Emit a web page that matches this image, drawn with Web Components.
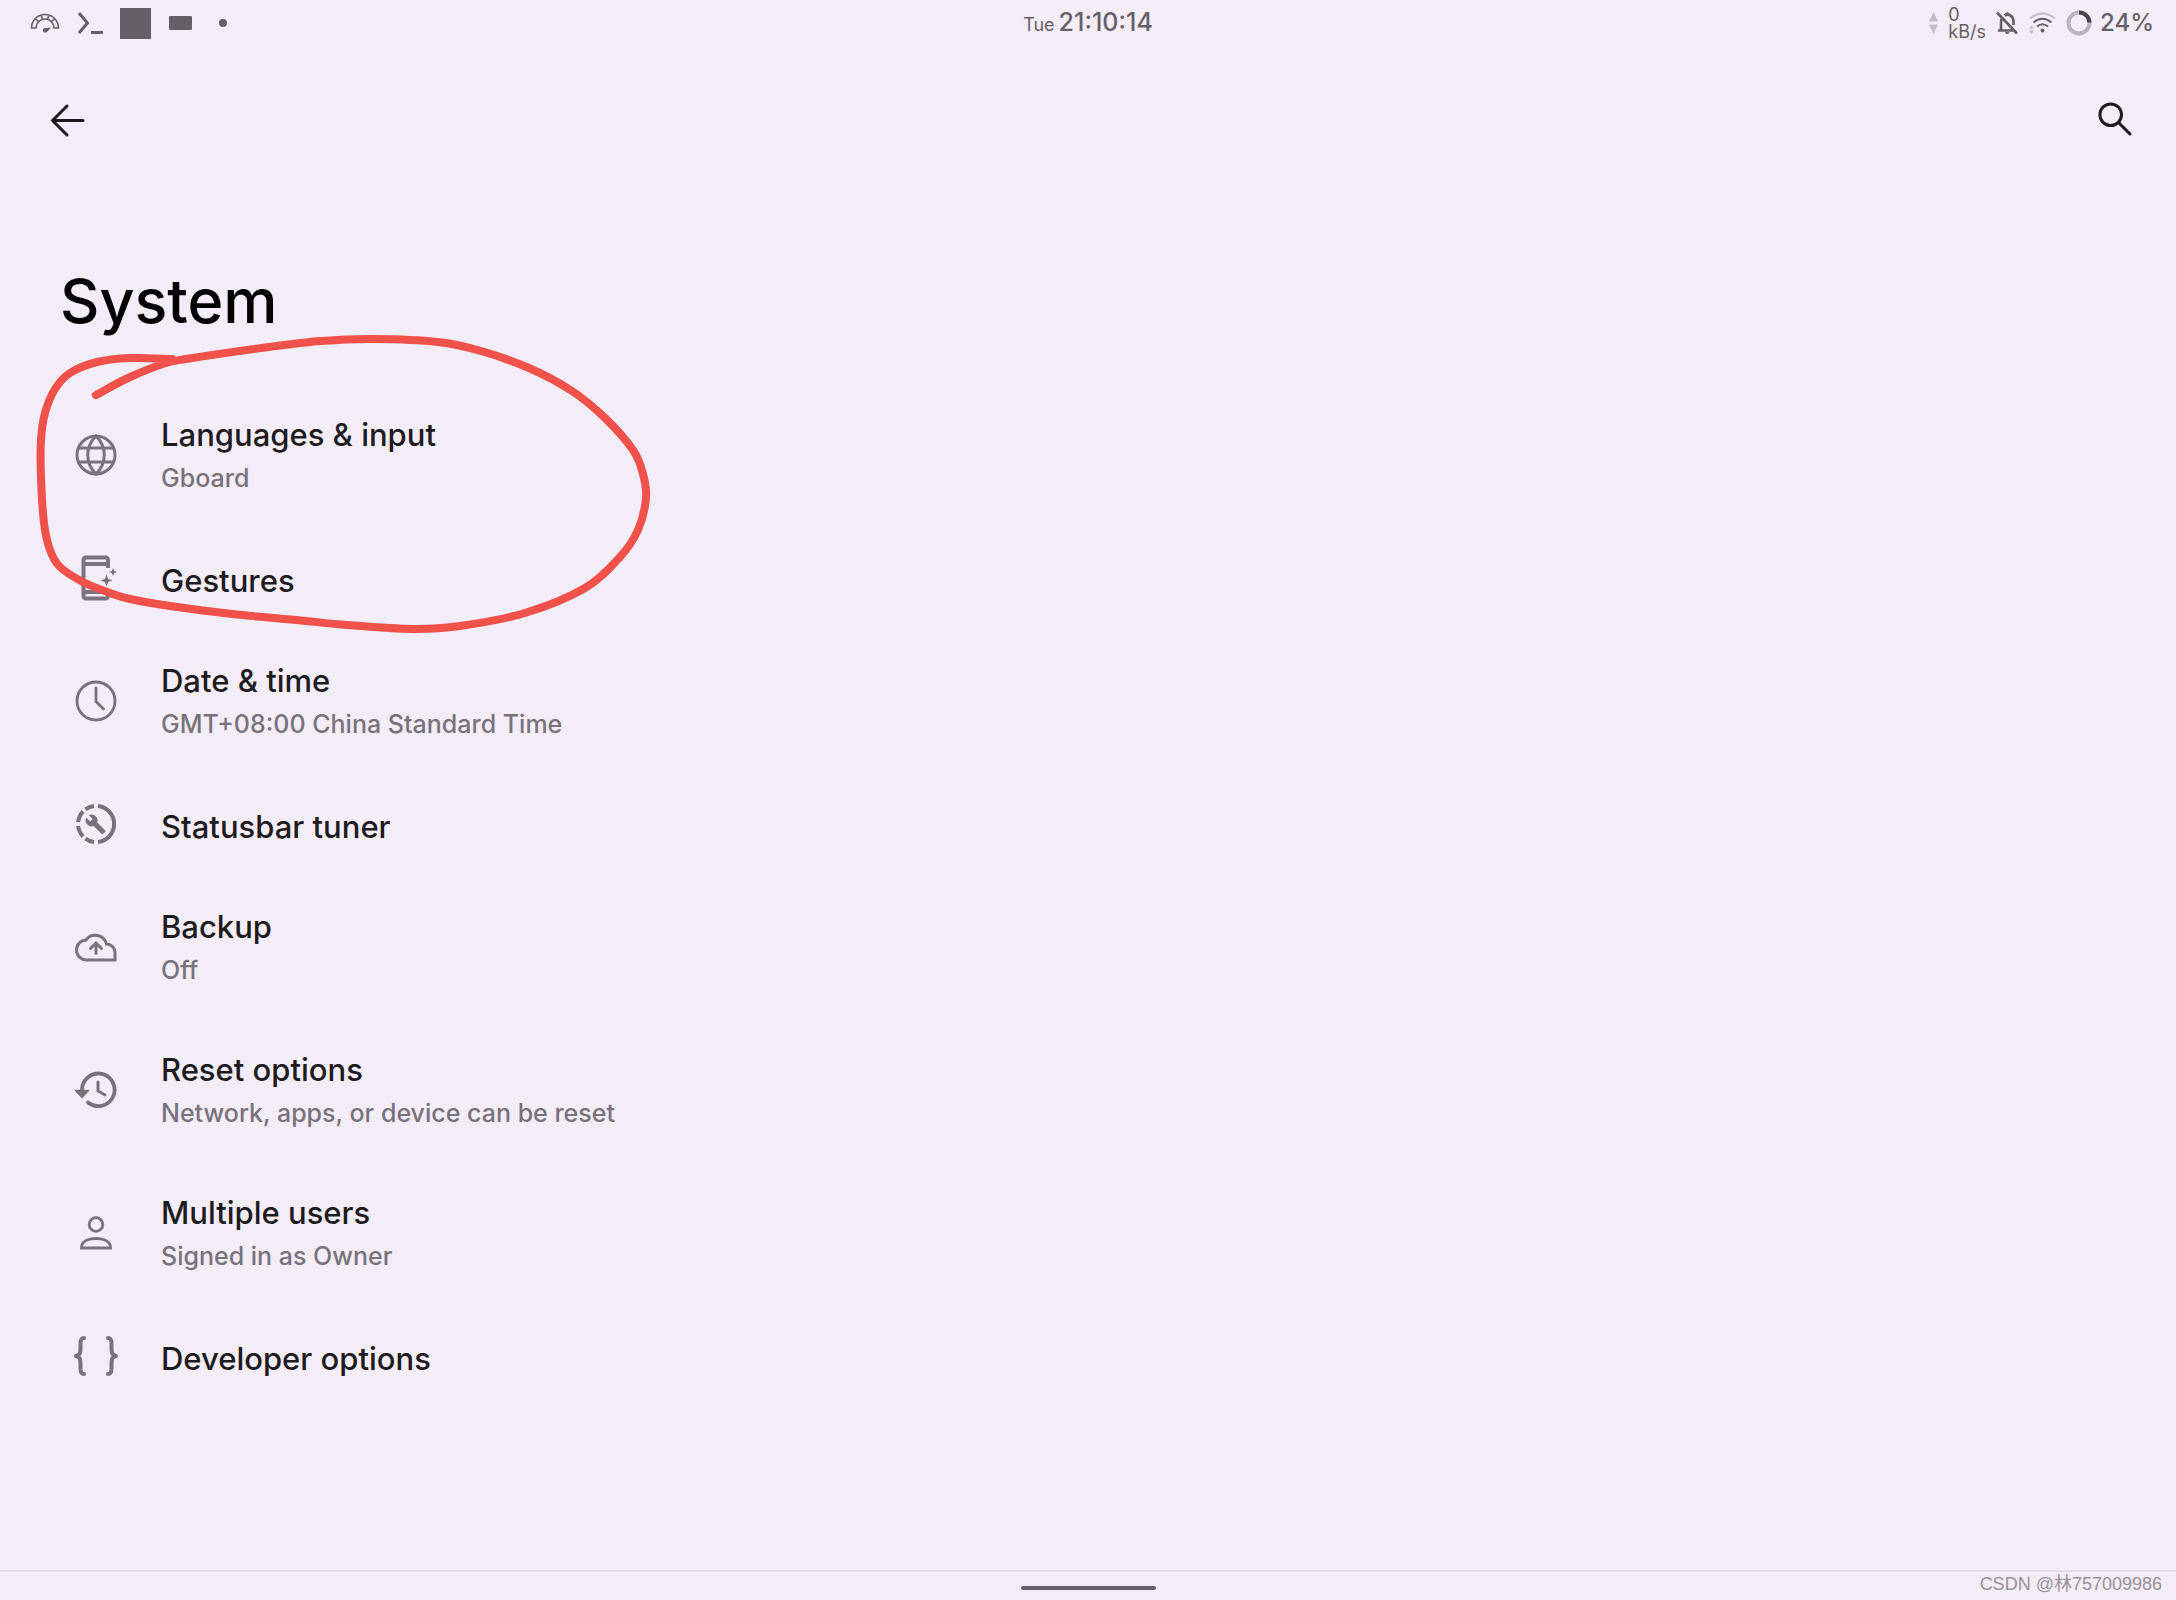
<!DOCTYPE html>
<html lang="en">
<head>
  <meta charset="utf-8">
  <title>System</title>
  <style>
    :root {
      --surface: #f3edf7;
      --ink: #1d1b20;
      --muted: #77727b;
      --status: #655f68;
      --faint: #c3bdc8;
    }

    body {
      margin: 0;
      min-height: 100vh;
      display: flex;
      flex-direction: column;
      position: relative;
      background: var(--surface);
      color: var(--ink);
      font-family: "Google Sans", Inter, "Noto Sans CJK SC", sans-serif;
      font-weight: 500;
    }

    main {
      flex: 1;
    }

    h1 {
      margin: 0;
      padding: 85px 60px 45px;
      font-size: 61px;
      line-height: 80px;
      font-weight: 500;
      color: #000;
    }
  </style>
</head>
<body>
  <status-bar></status-bar>
  <app-toolbar></app-toolbar>
  <main>
    <h1>System</h1>
    <settings-list>
      <setting-row icon="globe">Languages &amp; input<span slot="summary">Gboard</span></setting-row>
      <setting-row icon="gestures">Gestures</setting-row>
      <setting-row icon="clock">Date &amp; time<span slot="summary">GMT+08:00 China Standard Time</span></setting-row>
      <setting-row icon="tuner">Statusbar tuner</setting-row>
      <setting-row icon="backup">Backup<span slot="summary">Off</span></setting-row>
      <setting-row icon="reset">Reset options<span slot="summary">Network, apps, or device can be reset</span></setting-row>
      <setting-row icon="user">Multiple users<span slot="summary">Signed in as Owner</span></setting-row>
      <setting-row icon="braces">Developer options</setting-row>
    </settings-list>
  </main>
  <nav-handle>CSDN @林757009986</nav-handle>
  <pen-stroke></pen-stroke>

  <script>
    // all row icons are drawn on a 48x48 grid
    const icons = {
      globe: `
        <g stroke-width="3">
          <circle cx="24" cy="24" r="19"/>
          <path d="M24 5C13 16 13 32 24 43C35 32 35 16 24 5ZM6 17H42M6 31H42"/>
        </g>`,
      gestures: `
        <g stroke-width="4">
          <path d="M36 14V6a2.5 2.5 0 0 0-2.5-2.5H14A2.5 2.5 0 0 0 11.5 6V42a2.5 2.5 0 0 0 2.5 2.5H33.5A2.5 2.5 0 0 0 36 42V37"/>
          <path d="M12 10H36M12 38H36"/>
        </g>
        <path fill="currentColor" stroke="none" d="M34.5 20.5l1.6 4.4 4.4 1.6-4.4 1.6-1.6 4.4-1.6-4.4-4.4-1.6 4.4-1.6ZM41 14l1.2 2.9 2.9 1.1-2.9 1.1-1.2 2.9-1.2-2.9-2.9-1.1 2.9-1.1Z"/>`,
      clock: `
        <g stroke-width="2.8">
          <circle cx="24" cy="24" r="19"/>
          <path stroke-linecap="round" d="M24 11V24.5L31.5 32"/>
        </g>`,
      tuner: `
        <path stroke-width="4" d="M26 6.1A18 18 0 0 1 26 41.9M22 6.1A18 18 0 0 0 13.4 9.4M11.1 11.5A18 18 0 0 0 6.1 22.1M6.1 25.9A18 18 0 0 0 11.1 36.5M13.4 38.6A18 18 0 0 0 22 41.9"/>
        <path fill="currentColor" stroke="currentColor" stroke-width=".6" transform="translate(13 13.8) scale(.88)" d="M22.7 19l-9.1-9.1c.9-2.3.4-5-1.5-6.9-2-2-5-2.4-7.4-1.3L9 6 6 9 1.6 4.7C.4 7.1.9 10.1 2.9 12.1c1.9 1.9 4.6 2.4 6.9 1.5l9.1 9.1c.4.4 1 .4 1.4 0l2.3-2.3c.5-.4.5-1.1.1-1.4z"/>`,
      backup: `
        <path stroke-width="3" d="M43 37H15A10 10 0 0 1 14 17A11.5 11.5 0 0 1 34.5 21A8.5 8.5 0 0 1 43 29.5Z"/>
        <path stroke-width="3" d="M24 31.5V20.5"/>
        <path stroke-width="3" stroke-linecap="round" d="M18.5 25.5L24 20L29.5 25.5"/>`,
      reset: `
        <path stroke-width="3.8" stroke-linecap="round" d="M10 24A16.3 16.3 0 1 1 16 36.5"/>
        <path fill="currentColor" stroke-width="1.5" stroke-linejoin="round" d="M3.5 24.5H16.5L10 31.5Z"/>
        <path stroke-width="3" stroke-linecap="round" d="M26 16V25L33 29"/>`,
      user: `
        <g stroke-width="2.8">
          <circle cx="24" cy="15.5" r="6.8"/>
          <path d="M9.4 39C9.4 32.5 16 29.5 24 29.5S38.6 32.5 38.6 39Z"/>
        </g>`,
      braces: `
        <g stroke-width="4" stroke-linecap="round" stroke-linejoin="round">
          <path d="M12 6C8.5 6 8.5 9 8.5 12V16C8.5 21 8 23 4 24C8 25 8.5 27 8.5 32V36C8.5 39 8.5 42 12 42"/>
          <path d="M36 6C39.5 6 39.5 9 39.5 12V16C39.5 21 40 23 44 24C40 25 39.5 27 39.5 32V36C39.5 39 39.5 42 36 42"/>
        </g>`,
    }

    class StatusBar extends HTMLElement {
      constructor() {
        super()
        this.attachShadow({ mode: 'open' })
        this.shadowRoot.innerHTML = `${this.css}${this.html}`
      }

      get css() {
        return /*html*/`
          <style>
            :host {
              display: grid;
              grid-template-columns: 1fr auto 1fr;
              align-items: center;
              height: 46px;
              padding: 0 22px;
              color: var(--status);
              font-size: 25px;
              line-height: 32px;
            }

            svg {
              display: block;
              flex: none;
              fill: none;
              stroke: currentColor;
            }

            div {
              display: flex;
              align-items: center;
            }

            .notifications {
              gap: 16px;
              padding-left: 8px;
            }

            .block {
              width: 31px;
              height: 31px;
              margin-left: 1px;
              background: currentColor;
            }

            .card {
              width: 23px;
              height: 14px;
              border-radius: 1px;
              margin-left: 2px;
              background: currentColor;
            }

            .dot {
              width: 8px;
              height: 8px;
              border-radius: 50%;
              margin-left: 11px;
              background: currentColor;
            }

            .clock {
              gap: 4px;
              align-items: baseline;
            }

            .clock small {
              font-size: 18px;
              font-weight: 400;
            }

            .system {
              justify-content: flex-end;
              gap: 10px;
            }

            .speed {
              display: block;
              font-size: 18px;
              line-height: 17px;
              font-weight: 400;
            }

            .battery {
              font-size: 24px;
              margin-left: -2px;
            }

            .faint {
              color: var(--faint);
            }
          </style>
        `
      }

      get html() {
        return /*html*/`
          <div class="notifications">
            <svg width="30" height="22" viewBox="0 0 30 22" stroke-width="1.6">
              <path d="M1.5 16A13.5 13.5 0 0 1 28.5 16H24A9 9 0 0 0 6 16ZM5 6.5L9 10M11 2.5L12.5 7.5M19 2.5L17.5 7.5M25 6.5L21 10"/>
              <path fill="currentColor" stroke="none" d="M21 15.5L18 19Q16 21.5 13.5 20Q12 17.5 14 16.2Z"/>
            </svg>
            <svg width="27" height="22" viewBox="0 0 27 22" stroke-width="3">
              <path d="M3 1L11.5 11L3 21M15 20.5H27"/>
            </svg>
            <span class="block"></span>
            <span class="card"></span>
            <span class="dot"></span>
          </div>
          <div class="clock"><small>Tue</small><span>21:10:14</span></div>
          <div class="system">
            <svg class="faint" width="9" height="22" viewBox="0 0 9 22">
              <path fill="currentColor" stroke="none" d="M4.5 0L9 9.5H0ZM4.5 22L9 12.5H0Z"/>
            </svg>
            <div class="speed">0<br>kB/s</div>
            <svg width="22" height="24" viewBox="0 0 22 24" stroke-width="2.6">
              <path d="M1 1.5L21 22.5M2 19.5H17M5 19V11C5 9 5.5 8 6 7M8.5 4.5C13 2 17.5 5 17.5 11V14"/>
              <path fill="currentColor" stroke="none" d="M9 3a2.3 2.3 0 0 1 4.5 0V5H9ZM9 21H13.5Q13.5 23 11.2 23Q9 23 9 21Z"/>
            </svg>
            <svg width="28" height="22" viewBox="0 0 28 22" stroke-width="2">
              <path stroke="var(--faint)" d="M2 6.5Q14.5-3.5 27 6.5"/>
              <path d="M5.5 10.5Q14.5 3 23.5 10.5M9 14.5Q14.5 10 20 14.5"/>
              <circle cx="14.5" cy="18.5" r="2" fill="currentColor" stroke="none"/>
              <path fill="var(--faint)" stroke="none" d="M3.5 13L6 16.5H1ZM3.5 22L6 18.5H1Z"/>
            </svg>
            <svg width="26" height="26" viewBox="0 0 26 26" stroke-width="4">
              <circle cx="13" cy="13" r="10.5" stroke="#b9b3be"/>
              <path stroke="#4a454e" d="M13 2.5A10.5 10.5 0 0 1 23.5 12.5"/>
            </svg>
            <span class="battery">24%</span>
          </div>
        `
      }
    }

    class AppToolbar extends HTMLElement {
      constructor() {
        super()
        this.attachShadow({ mode: 'open', delegatesFocus: true })
        this.shadowRoot.innerHTML = `${this.css}${this.html}`
      }

      get css() {
        return /*html*/`
          <style>
            :host {
              display: flex;
              justify-content: space-between;
              align-items: center;
              height: 112px;
              padding: 18px 36px 0 44px;
            }

            button {
              display: block;
              padding: 0;
              border: none;
              background: transparent;
              color: inherit;
              cursor: pointer;
            }

            svg {
              display: block;
              fill: none;
              stroke: currentColor;
              stroke-width: 3;
              stroke-linecap: round;
              stroke-linejoin: round;
            }
          </style>
        `
      }

      get html() {
        return /*html*/`
          <button aria-label="Navigate up">
            <svg width="48" height="48" viewBox="0 0 48 48">
              <path d="M39 24.5H9M23 10L8.5 24.5L23 39"/>
            </svg>
          </button>
          <button aria-label="Search settings">
            <svg width="48" height="48" viewBox="0 0 48 48">
              <circle cx="18.7" cy="18.7" r="10.8"/>
              <path d="M26.5 26.5L38 38"/>
            </svg>
          </button>
        `
      }
    }

    class SettingsList extends HTMLElement {
      constructor() {
        super()
        this.attachShadow({ mode: 'open' })
        this.shadowRoot.innerHTML = /*html*/`
          <style>
            :host {
              display: flex;
              flex-direction: column;
            }
          </style>
          <slot></slot>
        `
      }
    }

    class SettingRow extends HTMLElement {
      constructor() {
        super()
        this.attachShadow({ mode: 'open', delegatesFocus: true })
      }

      connectedCallback() {
        this.shadowRoot.innerHTML = `${this.css}${this.html}`
      }

      get css() {
        return /*html*/`
          <style>
            :host {
              display: block;
            }

            a {
              display: flex;
              align-items: center;
              gap: 41px;
              padding: 22px 72px 23px;
              color: var(--ink);
              text-decoration: none;
            }

            svg {
              display: block;
              flex: none;
              margin: 3px 0 7px;
              color: var(--muted);
              fill: none;
              stroke: currentColor;
            }

            .text {
              padding: 5px 0;
            }

            .title {
              font-size: 31px;
              line-height: 43px;
            }

            ::slotted([slot="summary"]) {
              display: block;
              color: var(--muted);
              font-size: 25px;
              line-height: 45px;
            }
          </style>
        `
      }

      get html() {
        return /*html*/`
          <a href="#">
            <svg width="48" height="48" viewBox="0 0 48 48">${icons[this.getAttribute('icon')]}</svg>
            <div class="text">
              <div class="title"><slot></slot></div>
              <slot name="summary"></slot>
            </div>
          </a>
        `
      }
    }

    class NavHandle extends HTMLElement {
      constructor() {
        super()
        this.attachShadow({ mode: 'open' })
        this.shadowRoot.innerHTML = /*html*/`
          <style>
            :host {
              display: grid;
              grid-template-columns: 1fr auto 1fr;
              align-items: center;
              height: 28px;
              padding: 0 14px;
              border-top: 2px solid #e2dce5;
            }

            .pill {
              grid-column: 2;
              width: 135px;
              height: 4px;
              margin-top: 4px;
              border-radius: 2px;
              background: var(--status);
            }

            .mark {
              justify-self: end;
              margin-bottom: 4px;
              color: #96919a;
              font: 400 18px/24px "Liberation Sans", "Noto Sans CJK SC", sans-serif;
            }
          </style>
          <span class="pill"></span>
          <span class="mark"><slot></slot></span>
        `
      }
    }

    class PenStroke extends HTMLElement {
      #points = [
        [96, 395], [128, 378], [163, 364], [186, 359], [269, 347], [321, 341], [373, 339],
        [438, 342], [481, 351], [529, 368], [572, 391], [605, 418], [633, 450], [643, 474],
        [646, 498], [638, 530], [620, 557], [585, 588], [525, 613], [460, 626], [412, 629],
        [347, 625], [297, 620], [232, 614], [170, 606], [130, 599], [110, 593], [83, 582],
        [60, 567], [50, 550], [44, 523], [41, 477], [41, 440], [45, 413], [55, 389],
        [70, 373], [97, 362], [130, 358], [172, 359],
      ]

      constructor() {
        super()
        this.attachShadow({ mode: 'open' })
        this.shadowRoot.innerHTML = /*html*/`
          <style>
            :host {
              position: absolute;
              top: 0;
              left: 0;
              pointer-events: none;
            }

            path {
              fill: none;
              stroke: #f0524b;
              stroke-width: 8;
              stroke-linecap: round;
              stroke-linejoin: round;
            }
          </style>
          <svg width="680" height="660"><path d="${this.outline}"/></svg>
        `
      }

      // smooth curve through every point
      get outline() {
        const p = this.#points
        let d = `M${p[0]}`
        for (let i = 0; i < p.length - 1; i++) {
          const before = p[i - 1] ?? p[i]
          const after = p[i + 2] ?? p[i + 1]
          const c1 = [0, 1].map((k) => p[i][k] + (p[i + 1][k] - before[k]) / 6)
          const c2 = [0, 1].map((k) => p[i + 1][k] - (after[k] - p[i][k]) / 6)
          d += `C${c1} ${c2} ${p[i + 1]}`
        }
        return d
      }
    }

    customElements.define('status-bar', StatusBar)
    customElements.define('app-toolbar', AppToolbar)
    customElements.define('settings-list', SettingsList)
    customElements.define('setting-row', SettingRow)
    customElements.define('nav-handle', NavHandle)
    customElements.define('pen-stroke', PenStroke)
  </script>
</body>
</html>
